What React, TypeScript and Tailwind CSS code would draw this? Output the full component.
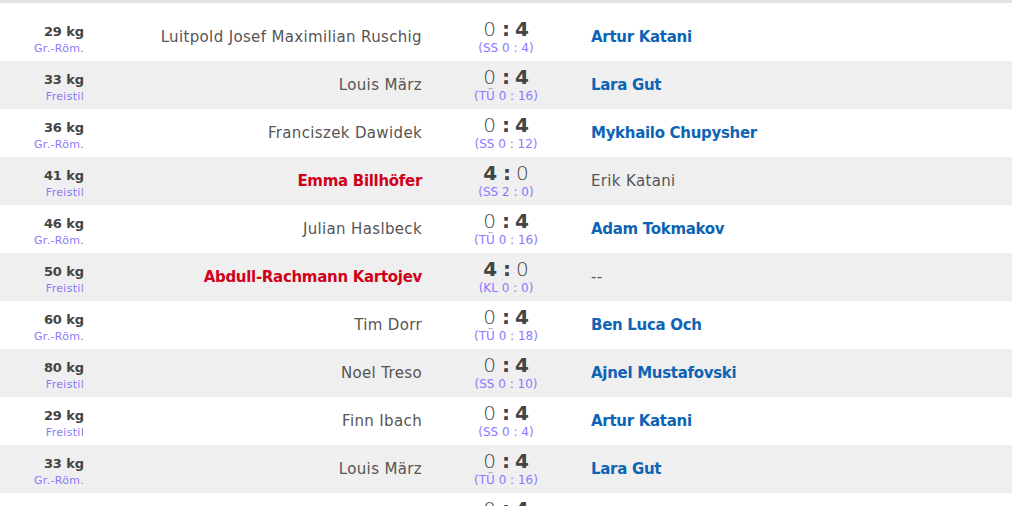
type Bout = {
  weight: string;
  style: string;
  home: string;
  guest: string;
  hs: number;
  gs: number;
  detail: string;
};

const bouts: Bout[] = [
  { weight: "29 kg", style: "Gr.-Röm.", home: "Luitpold Josef Maximilian Ruschig", guest: "Artur Katani", hs: 0, gs: 4, detail: "(SS 0 : 4)" },
  { weight: "33 kg", style: "Freistil", home: "Louis März", guest: "Lara Gut", hs: 0, gs: 4, detail: "(TÜ 0 : 16)" },
  { weight: "36 kg", style: "Gr.-Röm.", home: "Franciszek Dawidek", guest: "Mykhailo Chupysher", hs: 0, gs: 4, detail: "(SS 0 : 12)" },
  { weight: "41 kg", style: "Freistil", home: "Emma Billhöfer", guest: "Erik Katani", hs: 4, gs: 0, detail: "(SS 2 : 0)" },
  { weight: "46 kg", style: "Gr.-Röm.", home: "Julian Haslbeck", guest: "Adam Tokmakov", hs: 0, gs: 4, detail: "(TÜ 0 : 16)" },
  { weight: "50 kg", style: "Freistil", home: "Abdull-Rachmann Kartojev", guest: "--", hs: 4, gs: 0, detail: "(KL 0 : 0)" },
  { weight: "60 kg", style: "Gr.-Röm.", home: "Tim Dorr", guest: "Ben Luca Och", hs: 0, gs: 4, detail: "(TÜ 0 : 18)" },
  { weight: "80 kg", style: "Freistil", home: "Noel Treso", guest: "Ajnel Mustafovski", hs: 0, gs: 4, detail: "(SS 0 : 10)" },
  { weight: "29 kg", style: "Freistil", home: "Finn Ibach", guest: "Artur Katani", hs: 0, gs: 4, detail: "(SS 0 : 4)" },
  { weight: "33 kg", style: "Gr.-Röm.", home: "Louis März", guest: "Lara Gut", hs: 0, gs: 4, detail: "(TÜ 0 : 16)" },
  { weight: "36 kg", style: "Gr.-Röm.", home: "Franciszek Dawidek", guest: "Mykhailo Chupysher", hs: 0, gs: 4, detail: "(SS 0 : 12)" },
];

export default function App() {
  return (
    <div className="h-[506px] w-[1012px] overflow-hidden bg-white font-['DejaVu_Sans',sans-serif] text-[#444]">
      <div className="border-t-[3px] border-[#e2e2e2] pt-[10px]">
        {bouts.map((b, i) => (
          <BoutRow key={i} bout={b} shaded={i % 2 === 1} />
        ))}
      </div>
    </div>
  );
}

function BoutRow({ bout, shaded }: { bout: Bout; shaded: boolean }) {
  const homeWon = bout.hs > bout.gs;
  return (
    <div className={`flex h-[48px] items-center ${shaded ? "bg-[#efefef]" : "bg-white"}`}>
      <div className="flex w-[84px] flex-col items-end pt-[3px]">
        <div className="text-[13px] font-bold leading-[19px] tracking-[-0.1px]">{bout.weight}</div>
        <div className="text-[11px] leading-[15px] tracking-[0.3px] text-[#8a78ff]">{bout.style}</div>
      </div>
      <div
        className={`w-[338px] text-right text-[15px] ${
          homeWon ? "font-bold tracking-[-0.3px] text-[#d0011b]" : "font-normal tracking-[0.35px] text-[#555]"
        }`}
      >
        {bout.home}
      </div>
      <div className="flex w-[168px] flex-col items-center">
        <div className="text-[20px] leading-[22px]">
          <span className={bout.hs > bout.gs ? "font-bold" : "font-light"}>{bout.hs}</span>
          <span className="font-bold tracking-[-1px]"> : </span>
          <span className={bout.gs > bout.hs ? "font-bold" : "font-light"}>{bout.gs}</span>
        </div>
        <div className="text-[12px] leading-[16px] text-[#8a78ff]">{bout.detail}</div>
      </div>
      <div
        className={`pl-[1px] text-[15px] ${
          !homeWon ? "font-bold tracking-[-0.3px] text-[#0e64b4]" : "font-normal tracking-[0.35px] text-[#555]"
        }`}
      >
        {bout.guest}
      </div>
    </div>
  );
}
